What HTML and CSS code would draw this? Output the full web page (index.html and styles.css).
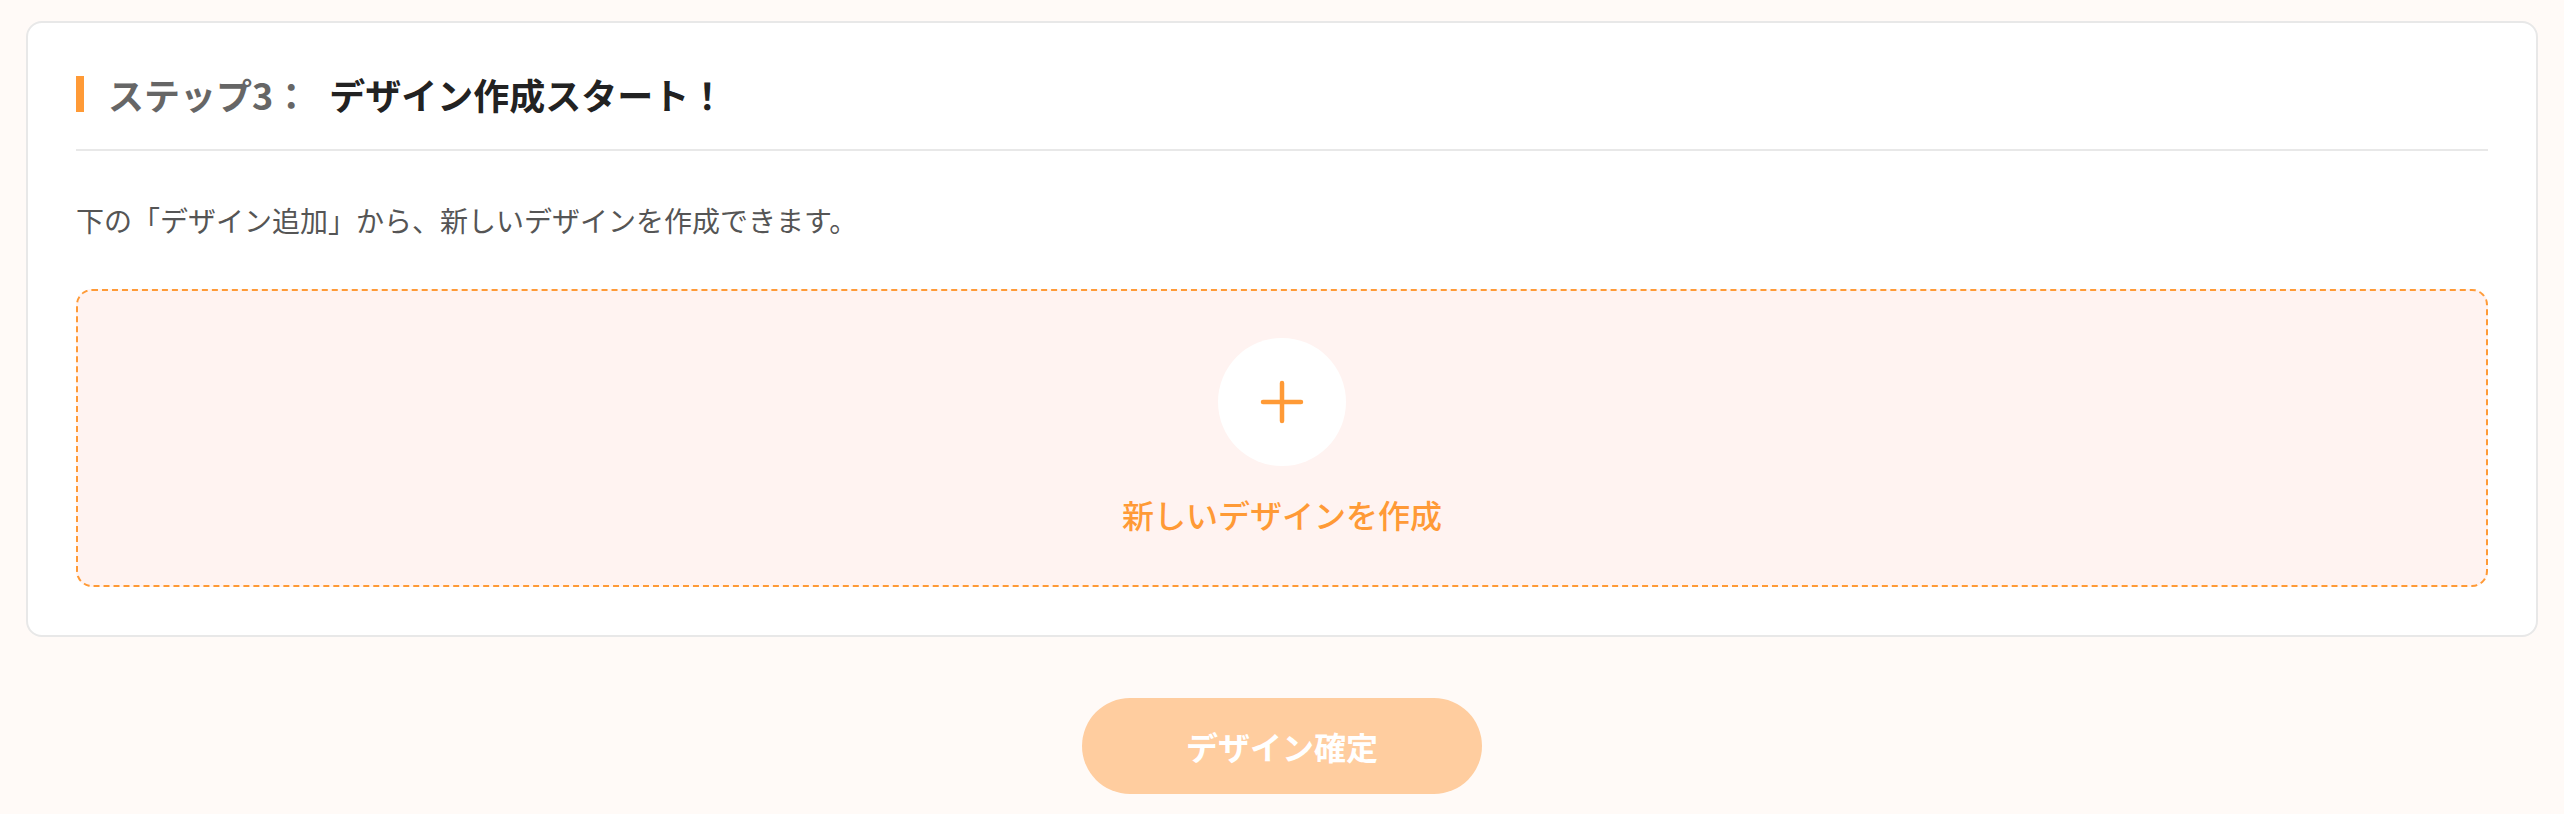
FILE: index.html
```html
<!DOCTYPE html>
<html lang="ja">
<head>
<meta charset="UTF-8">
<meta name="viewport" content="width=device-width, initial-scale=1.0">
<title>デザイン作成</title>
<link rel="stylesheet" href="styles.css">
</head>
<body>

<div class="page">
  <div class="card">
    <h2 class="step-title">
      <span class="step-no">ステップ3：</span>
      <span>デザイン作成スタート！</span>
    </h2>

    <p class="step-desc">下の「デザイン追加」から、新しいデザインを作成できます。</p>

    <div class="add-box">
      <div class="add-circle">
        <svg width="44" height="44" viewBox="0 0 44 44">
          <path d="M22 3 V41 M3 22 H41" stroke="#ff9a36" stroke-width="4.5" stroke-linecap="round" fill="none"/>
        </svg>
      </div>
      <div class="add-label">新しいデザインを作成</div>
    </div>
  </div>

  <div class="actions">
    <button class="confirm-btn" disabled>デザイン確定</button>
  </div>
</div>

</body>
</html>
```

FILE: styles.css
```css
body {
  margin: 0;
  font-family: "Noto Sans CJK JP", "Noto Sans", sans-serif;
  background-color: #fffaf7;
}
.page {
  padding: 21px 26px 0 26px;
}
.card {
  background-color: #fff;
  border: 2px solid #e8e8e8;
  border-radius: 16px;
  padding: 48px 48px 48px 48px;
}
.step-title {
  display: flex;
  align-items: center;
  margin: 0;
  padding-bottom: 32px;
  border-bottom: 2px solid #e8e8e8;
  font-size: 36px;
  line-height: 46px;
  font-weight: 700;
  color: #222;
}
.step-title::before {
  content: "";
  width: 8px;
  height: 36px;
  background-color: #ff9a36;
  margin-right: 24px;
}
.step-no {
  color: #666;
  margin-right: 20px;
}
.step-desc {
  margin: 48px 0 48px 0;
  font-size: 28px;
  line-height: 42px;
  color: #555;
}
.add-box {
  display: flex;
  flex-direction: column;
  align-items: center;
  gap: 24px;
  padding: 47px 0;
  border: 2px dashed #ff9a36;
  border-radius: 16px;
  background-color: #fff3f1;
}
.add-circle {
  display: flex;
  align-items: center;
  justify-content: center;
  width: 128px;
  height: 128px;
  border-radius: 50%;
  background-color: #fff;
}
.add-label {
  font-size: 32px;
  line-height: 48px;
  font-weight: 500;
  color: #ff9a36;
}
.actions {
  display: flex;
  justify-content: center;
  margin-top: 61px;
}
.confirm-btn {
  width: 400px;
  height: 96px;
  border: none;
  border-radius: 48px;
  background-color: #ffcd9f;
  color: #fff;
  font-family: inherit;
  font-size: 32px;
  font-weight: 700;
}
```
